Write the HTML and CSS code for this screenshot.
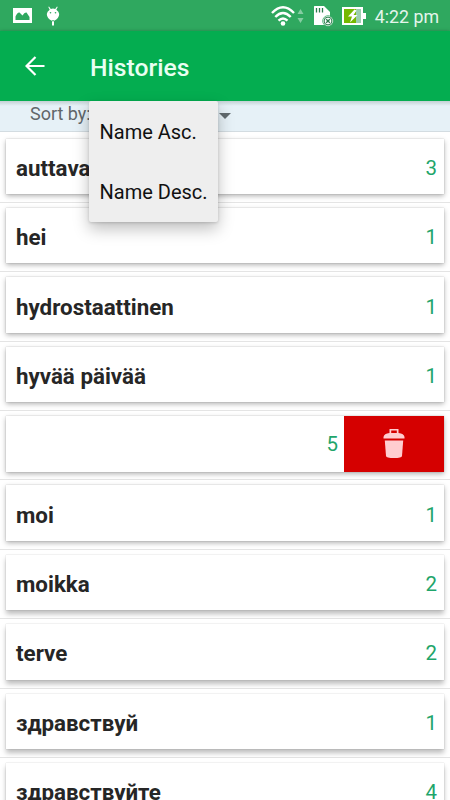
FILE: index.html
```
<!DOCTYPE html>
<html lang="en">
<head>
<meta charset="utf-8">
<title>Histories</title>
<link rel="stylesheet" href="styles.css">
</head>
<body>
<div class="screen">
  <header class="status">
    <div class="notices">
      <svg width="19" height="15" viewBox="0 0 19 15"><path fill="#fff" d="M0 0h19v15H0z"/><path fill="#2fa85f" d="M2.500 12V8.500Q4.500 4 6.500 4.500L9.500 7.500Q11.500 4 13.500 4.500L16.500 9v3z"/></svg>
      <svg class="droid" width="14" height="20" viewBox="0 0 14 20"><path fill="#fff" d="M3 .5l1.800 2.600Q7 2 9.200 3.100L11 .5l.7.500-1.400 2.800Q13 5.500 13.200 8 13 12.500 8.200 14.700H8v4.800H6v-4.800h-.2Q1 12.500.8 8 1 5.500 3.700 3.800L2.300 1z"/><circle cx="4.500" cy="6.800" r=".8" fill="#2fa85f"/><circle cx="9.500" cy="6.800" r=".8" fill="#2fa85f"/><path d="M6 14.800h2" stroke="#2fa85f" stroke-width="1"/></svg>
    </div>
    <div class="system">
      <svg width="34" height="22" viewBox="0 0 34 22"><g fill="none" stroke="#fff" stroke-width="2.400"><path d="M1 8Q12 -3.500 23 8"/><path d="M4.300 12Q12 4 19.700 12"/><path d="M7.500 15.600Q12 11.200 16.500 15.600"/></g><circle cx="12" cy="18.500" r="2.300" fill="#fff"/><path fill="#85cda2" d="M26.500 9l3-5 3 5zM26.500 13l3 5 3-5z"/></svg>
      <svg class="card-icon" width="21" height="22" viewBox="0 0 21 22"><path fill="#fff" d="M1.500 1h9.500l6 6v13h-16V2q0-1 .5-1z"/><path stroke="#2b7c4c" stroke-width="1.300" d="M3.500 3v4.500M6.500 3v4.500M9.500 3v4.500"/><circle cx="15" cy="16" r="5.300" fill="#fff" stroke="#2fa85f" stroke-width=".8"/><circle cx="15" cy="16" r="3.900" fill="none" stroke="#2b7c4c" stroke-width="1"/><path stroke="#2b7c4c" stroke-width="1.300" d="M13.200 14.200l3.600 3.600M16.800 14.200l-3.600 3.600"/></svg>
      <svg class="battery" width="24" height="18" viewBox="0 0 24 18"><path fill="#fff" d="M0 0h21v6h3v6h-3v6H0z"/><path fill="#75b800" d="M2 2h12v14H2z"/><path fill="#9dceb0" d="M14 2h5v14h-5z"/><path fill="#fff" d="M12.500 2.500L6 9.500h4L8 15.500l7.500-7.500h-4l3-4.500z"/></svg>
      <span class="clock">4:22 pm</span>
    </div>
  </header>
  <div class="toolbar">
    <svg class="back" width="20" height="20" viewBox="0 0 20 20"><path fill="none" stroke="#fff" stroke-width="2.200" d="M19.500 10H2M10.500 1L1.500 10l9 9"/></svg>
    <h1>Histories</h1>
  </div>
  <div class="sort">
    <span>Sort by:</span>
    <i class="caret"></i>
    <div class="menu"><div>Name Asc.</div><div>Name Desc.</div></div>
  </div>
  <main class="list">
    <div class="row"><div class="card"><b>auttava</b><span>3</span></div></div>
    <div class="row"><div class="card"><b>hei</b><span>1</span></div></div>
    <div class="row"><div class="card"><b>hydrostaattinen</b><span>1</span></div></div>
    <div class="row"><div class="card"><b>hyvää päivää</b><span>1</span></div></div>
    <div class="row"><div class="card swiped"><span>5</span><div class="delete"><svg width="22" height="30" viewBox="0 0 22 30"><path fill="#ffcdd0" fill-rule="evenodd" d="M6.500 0h9v4q5.500.5 6 4v1.500H.5V8q.5-3.500 6-4zM8.200 1.600V4h5.600V1.600z"/><path fill="#ffcdd0" d="M1.800 11.500h18.400l-1.200 15.500q-.3 2-8 2t-8-2z"/></svg></div></div></div>
    <div class="row"><div class="card"><b>moi</b><span>1</span></div></div>
    <div class="row low"><div class="card"><b>moikka</b><span>2</span></div></div>
    <div class="row low"><div class="card"><b>terve</b><span>2</span></div></div>
    <div class="row low"><div class="card"><b>здравствуй</b><span>1</span></div></div>
    <div class="row low"><div class="card"><b>здравствуйте</b><span>4</span></div></div>
  </main>
</div>
</body>
</html>
```
FILE: styles.css
```
* { box-sizing: border-box; }
body { margin: 0; font-family: Roboto, sans-serif; background: #fff; }
svg { display: block; flex: none; }
.screen { width: 450px; height: 800px; overflow: hidden; display: flex; flex-direction: column; }
.status { height: 31px; flex: none; background: #2fa85f; display: flex; justify-content: space-between; padding: 0 11px 0 13px; }
.notices, .system { display: flex; align-items: center; }
.droid { margin-left: 14px; }
.card-icon { margin-left: 8px; }
.battery { margin-left: 8px; }
.clock { color: #e4f5eb; font-size: 17.800px; line-height: 29px; margin-left: 9px; margin-top: 2px; white-space: nowrap; }
.toolbar { height: 70px; flex: none; background: #04ad50; display: flex; align-items: center; padding-left: 25px; position: relative; z-index: 1; box-shadow: 0 1px 4px rgba(0,0,0,.4); }
.toolbar h1 { margin: 3px 0 0 45px; color: #e9fff2; font-size: 24.700px; font-weight: 500; line-height: 30px; }
.sort { height: 31px; flex: none; background: #e6f1f7; border-bottom: 1px solid #d3dce1; padding-left: 30px; color: #61676a; font-size: 18px; line-height: 26px; position: relative; z-index: 2; display: flex; background-image: linear-gradient(#c3d1d4, #e6f1f7 5px); }
.caret { border: 6px solid transparent; border-top-color: #616a6e; border-bottom: 0; height: 6px; margin: 12px 0 0 128px; }
.menu { position: absolute; left: 89px; top: 0; width: 129px; height: 121px; background: #eee; border-radius: 2px; box-shadow: 0 7px 16px rgba(0,0,0,.25), 0 1px 3px rgba(0,0,0,.15); color: #111; font-size: 20px; line-height: 60px; padding: 1px 0 0 10.500px; white-space: nowrap; }
.list { flex: none; padding-top: 1.500px; }
.row { height: 69.400px; padding: 5px 6px 0; border-bottom: 1px solid #e4e4e4; background: #fff; }
.card { height: 55.500px; display: flex; align-items: center; justify-content: space-between; padding: 3px 7px 0 10px; background: #fff; box-shadow: 0 2px 5px rgba(0,0,0,.3), 0 0 1px rgba(0,0,0,.25); }
.low .card { box-shadow: 0 4px 5px rgba(0,0,0,.26), 0 0 1px rgba(0,0,0,.25); }
.card b { font-size: 22.350px; font-weight: 700; color: #262626; line-height: 28px; }
.card span { font-size: 20.500px; color: #1fa56b; line-height: 28px; }
.card.swiped { justify-content: flex-end; padding: 0; }
.swiped span { margin: 1px 6px 0 0; }
.delete { align-self: stretch; width: 100px; background: #d50000; display: flex; align-items: center; justify-content: center; }
```
